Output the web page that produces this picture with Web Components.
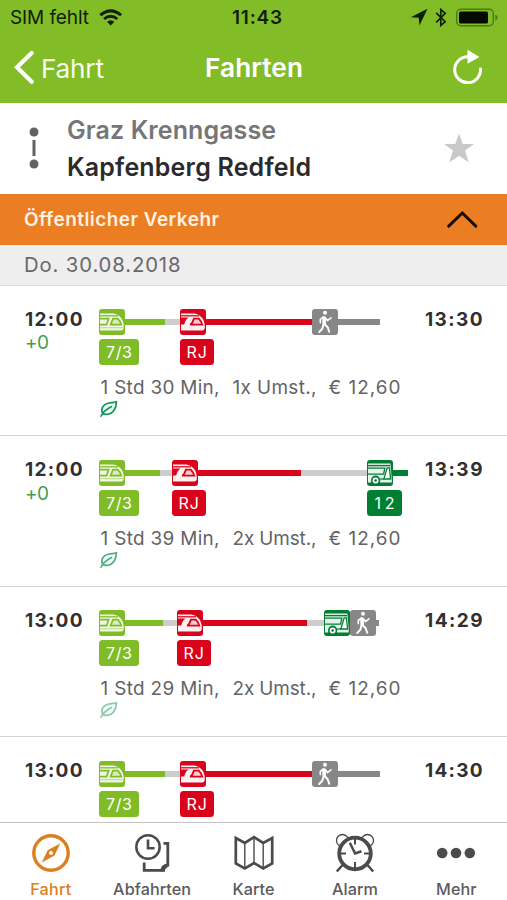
<!DOCTYPE html>
<html lang="de">
<head>
<meta charset="utf-8">
<title>Fahrten</title>
<style>
html,body{margin:0;height:100%;overflow:hidden}
body{font-family:Inter,"Liberation Sans",sans-serif;background:#fff;color:#2b2b2d}
</style>
</head>
<body>
<trip-app></trip-app>
<script>
const define = (name, html, setup) => customElements.define(name, class extends HTMLElement {
  connectedCallback() {
    if (this.shadowRoot) return;
    const root = this.attachShadow({mode: 'open'});
    root.innerHTML = typeof html === 'function' ? html(this) : html;
    if (setup) setup(this, root);
  }
});

/* Text tracked so that it fills the width given in its "w" attribute. */
define('fit-text', '<style>:host{display:block;white-space:pre;flex:none}span{display:inline-block}</style><span><slot></slot></span>', (el, root) => {
  const span = root.querySelector('span'), w = parseFloat(el.getAttribute('w'));
  const n = el.textContent.length;
  el.style.width = w + 'px';
  span.style.letterSpacing = (w - span.getBoundingClientRect().width) / (n - 1) + 'px';
});

const icons = {
  train: bg => `<rect width="26" height="26" rx="3" fill="${bg}"/>
<path d="M1 4.6H14.5Q20.5 5.4 23.6 11.5Q24.8 14.5 24.8 18Q24.8 21.6 21.8 21.6H1Z" fill="#fff" fill-opacity=".88"/>
<path d="M1 6.8H19" stroke="${bg}" stroke-width="1.3"/>
<path d="M1 9.7H9.6L7.6 15.7H1" fill="none" stroke="${bg}" stroke-width="1.7"/>
<path d="M14 9.7H18.8Q21.5 12.4 22.3 15.7H11.6Z" fill="${bg}" fill-opacity=".2" stroke="${bg}" stroke-width="1.7"/>
<path d="M1 18.7H24.8" stroke="${bg}" stroke-width=".5"/>`,
  express: bg => `<rect width="26" height="26" rx="3" fill="${bg}"/>
<path d="M1 4.6H14.5Q20.5 5.4 23.6 11.5Q24.8 14.5 24.8 18Q24.8 21.6 21.8 21.6H1Z" fill="#fff" fill-opacity=".94"/>
<path d="M1 6.8H19" stroke="${bg}" stroke-width="1.3"/>
<path d="M1 8.6H8.6Q5.6 10.3 4.2 15.5H1Z" fill="${bg}"/>
<path d="M13.8 9.7H18.8Q21.5 12.4 22.3 15.7H10.2Q12.6 14.4 13.8 9.7Z" fill="${bg}" fill-opacity=".15" stroke="${bg}" stroke-width="1.8"/>`,
  bus: bg => `<rect width="26" height="26" rx="3" fill="${bg}"/>
<path d="M1 3.6H23.4L24.8 19.5V22.5H13.1A4.6 4.6 0 0 0 4.1 22.5H1Z" fill="#fff" fill-opacity=".9"/>
<path d="M1 5.6H23" stroke="${bg}" stroke-width="1.4"/>
<path d="M1 8.2H17.8L16.6 14.2H1" fill="none" stroke="${bg}" stroke-width="1.3"/>
<path d="M20.2 7.8H22.4L23.6 19H16.8Z" fill="#fff" stroke="${bg}" stroke-width="1.3"/>
<path d="M12.5 19H16.8" stroke="${bg}" stroke-width="1.2"/>
<circle cx="8.6" cy="20.2" r="4.6" fill="${bg}"/><circle cx="8.6" cy="20.4" r="3" fill="#fff"/><circle cx="8.6" cy="20.5" r="1.3" fill="${bg}"/>`,
  walk: bg => `<rect width="26" height="26" rx="3" fill="${bg}"/>
<circle cx="13" cy="3.8" r="2" fill="#fff"/>
<g fill="none" stroke="#fff" stroke-linecap="round" stroke-linejoin="round"><path d="M12 9L12.2 14.4" stroke-width="3.6"/><path d="M11.4 8L8.3 10.4V13.6" stroke-width="1.6"/><path d="M13.2 8.5L15.4 11.6L19 8.8" stroke-width="1.6"/><path d="M12.5 15L15.7 18.3L17.2 22.7" stroke-width="2"/><path d="M11.5 15.5L10.4 19.6L7.2 23" stroke-width="2"/></g>`
};

define('trip-leg', el => {
  const c = el.getAttribute('color'), i = el.getAttribute('icon'), b = el.getAttribute('badge');
  const ride = el.getAttribute('ride'), w = el.getAttribute('w');
  return `<style>
  :host{display:flex;flex-direction:column;flex:none;width:${w}px;gap:4px;align-items:flex-start}
  .track{display:flex;align-items:center;width:${w}px;height:26px}
  svg{flex:none;display:block}
  .ride{width:${ride}px;height:6px;background:${c};flex:none}
  .wait{flex:1;height:6px;background:#cdcdcd}
  .badge{height:26px;border-radius:3.5px;background:${c};color:#fff;font:400 16px/27px Inter,sans-serif;display:flex;justify-content:center}
  </style><div class="track"><svg width="26" height="26" viewBox="0 0 26 26">${icons[i](c)}</svg><div class="ride"></div><div class="wait"></div></div>
  ${b ? `<div class="badge" style="width:${el.getAttribute('bw')}px"><fit-text w="${el.getAttribute('tw')}">${b}</fit-text></div>` : ''}`;
});

define('trip-row', el => {
  const a = n => el.getAttribute(n);
  return `<style>
  :host{display:grid;grid-template-columns:99px 326px 1fr;height:150.5px;box-sizing:border-box;border-bottom:1px solid #d4d4d6;flex:none}
  :host([cropped]){height:86px;border:0}
  .t{font:700 19px/24px Inter,sans-serif;color:#303032;padding-top:22.2px}
  .dep{padding-left:25px}
  .delay{font:400 19px/22px Inter,sans-serif;color:#469b50;margin-top:.5px}
  .legs{display:flex;height:56px;padding-top:23.5px}
  .info{display:flex;font:400 18.9px/24px Inter,sans-serif;color:#636365;padding:11px 0 0 1.5px}
  .info fit-text+fit-text{margin-left:13px}
  svg{display:block}
  </style><div class="t dep"><fit-text w="57.5">${a('dep')}</fit-text>${a('delay') ? `<div class="delay"><fit-text w="24">${a('delay')}</fit-text></div>` : ''}</div>
  <div><div class="legs"><slot></slot></div>
  ${a('time') ? `<div class="info"><fit-text w="119">${a('time')}</fit-text><fit-text w="84">${a('changes')}</fit-text><fit-text w="72" style="margin-left:12px">€ 12,60</fit-text></div>
  <svg width="20" height="18" viewBox="0 0 20 18" style="opacity:${a('leaf') || 1}"><path d="M3.8 13.5C1.2 8.5 4.4 4.4 9 3.2C12 2.4 14.5 2.7 17.4 1.8C17.5 8 14.2 13.8 8 14.4C6 14.6 4.8 14.3 3.8 13.5Z" fill="#e9faf2" stroke="#17945c" stroke-width="1.7"/><path d="M1.6 16.8C3.5 12.5 7.5 9 13 6.2" fill="none" stroke="#17945c" stroke-width="1.6"/></svg>` : ''}</div>
  <div class="t"><fit-text w="57.5">${a('arr')}</fit-text></div>`;
});

define('status-bar', `<style>
:host{display:flex;height:35px;align-items:center;color:#10200a;font:400 19px/34px Inter,sans-serif;padding-left:10px}
b{font-weight:600;margin-left:109px}svg{display:block;flex:none}
</style><fit-text w="79">SIM fehlt</fit-text>
<svg width="24" height="17" viewBox="0 0 24 17" style="margin-left:10px"><g fill="none" stroke="#10200a"><path d="M1.3 6.2Q11.7-2.5 22.1 6.2" stroke-width="3"/><path d="M5.1 10Q11.7 4.4 18.3 10" stroke-width="2.8"/></g><path d="M8 12.8Q11.7 9.7 15.4 12.8L11.7 16.6Z" fill="#10200a"/></svg>
<b><fit-text w="50">11:43</fit-text></b>
<svg width="92" height="22" viewBox="0 0 92 22" style="margin-left:128px"><path d="M.8 10.3L17.5 1.8L9.5 18.5L8.7 10.8Z" fill="#10200a"/><path d="M26.2 5.8L35.2 14.7L30.8 18.5V2.5L35.2 6.3L26.2 15.3" fill="none" stroke="#10200a" stroke-width="1.7"/><rect x="46.7" y="2.2" width="36.6" height="16.6" rx="4" fill="none" stroke="#487d18" stroke-width="1.4"/><rect x="49" y="4.6" width="29" height="11.8" rx="1.5" fill="#050b02"/><path d="M85.3 7.5V13.7Q87.7 12.5 87.7 10.5T85.3 7.5Z" fill="#487d18"/></svg>`);

define('nav-bar', `<style>
:host{display:grid;grid-template-columns:205px 1fr 55px;height:67.5px;color:#fff;font:400 26.2px/66px Inter,sans-serif}
.back{display:flex;align-items:center;padding-left:13px}.title{font-weight:600}
svg{display:block}.back svg{margin-top:-3px}.back fit-text{margin-left:7px;opacity:.94}
</style><div class="back"><svg width="21" height="36" viewBox="0 0 21 36"><path d="M18.7 4L4 18.3L18.7 32.7" fill="none" stroke="#fff" stroke-width="4.2" stroke-linecap="round"/></svg><fit-text w="63">Fahrt</fit-text></div>
<div class="title"><fit-text w="98">Fahrten</fit-text></div>
<svg width="34" height="38" viewBox="0 0 34 38" style="margin-top:13px"><path d="M15.5 8.8A12.9 12.9 0 1 0 28.5 21" fill="none" stroke="#fff" stroke-width="3" stroke-linecap="round"/><path d="M15.5 1.8L27.5 9L15.5 15.8Z" fill="#fff"/></svg>`);

define('route-header', `<style>
:host{display:grid;grid-template-columns:67px 1fr 65px;height:91.5px;align-items:center}
.n{font:600 25px/37px Inter,sans-serif;color:#2b2b2d;padding-top:1px}.o{color:#767678}svg{display:block}
</style><svg width="12" height="44" viewBox="0 0 12 44" style="margin-left:28px"><g fill="#636365"><circle cx="6" cy="6" r="4.5"/><circle cx="6" cy="38" r="4.5"/><rect x="4.5" y="14" width="3" height="16"/></g></svg>
<div class="n"><fit-text class="o" w="209">Graz Krenngasse</fit-text><fit-text w="244">Kapfenberg Redfeld</fit-text></div>
<svg width="34" height="32" viewBox="0 0 34 32"><path d="M17 1.5L20.7 12H32L23 18.6L26.8 30.5L17 23.7L7.2 30.5L11 18.6L2 12H13.3Z" fill="#c9c9cb"/></svg>`);

define('section-header', `<style>
:host{display:flex;justify-content:space-between;align-items:center;height:50.5px;background:#eb7d23;color:#fff1e2;font:600 19px/50px Inter,sans-serif;padding:0 28.5px 0 24px}svg{display:block}fit-text{padding-top:2px}
</style><fit-text w="195">Öffentlicher Verkehr</fit-text><svg width="34" height="22" viewBox="0 0 34 22"><path d="M3.7 18.1L17.3 5L30.8 18.1" fill="none" stroke="#1c0d03" stroke-width="3" stroke-linecap="round"/></svg>`);

define('date-header', `<style>
:host{display:block;height:41px;box-sizing:border-box;background:#eee;border-bottom:1px solid #dcdcde;color:#68686a;font:400 20.3px/40px Inter,sans-serif;padding-left:24px}
</style><fit-text w="156.5">Do. 30.08.2018</fit-text>`);

const tabs = {
  fahrt: `<circle cx="20" cy="20" r="17.2" fill="none" stroke="#dc7e22" stroke-width="3.4"/><path d="M29.2 10.5L23.5 22.5L10.8 29.5L16.7 17.2Z" fill="#dc7e22"/><circle cx="20" cy="20" r="2" fill="#fff"/>`,
  abfahrten: `<g fill="none" stroke="#4b4b4d"><circle cx="16" cy="14" r="11.7" stroke-width="2.5"/><path d="M16 6.5V15.3H22.5" stroke-width="2.6"/><path d="M31.5 10.3H35.8V32Q32 31.5 31.7 37.3H12.2V29.5" stroke-width="2.8"/></g><path d="M28.5 38.5Q28 30.5 36.5 31V33L31 38.5Z" fill="#4b4b4d"/>`,
  karte: `<g fill="none" stroke="#4b4b4d" stroke-linejoin="miter"><path d="M1.8 5L10.8 10L20 4.2L29.2 10L38.2 5V30.5L29.2 35.5L20 30L10.8 35.5L1.8 30.5Z" stroke-width="2.7"/><path d="M10.8 10V35M20 4.2V30M29.2 10V35" stroke-width="1.4"/></g>`,
  alarm: `<g fill="none" stroke="#4b4b4d"><circle cx="7.5" cy="7.5" r="6" stroke-width="1.3"/><circle cx="32.5" cy="7.5" r="6" stroke-width="1.3"/><path d="M7.5 32L1.8 38.5M32.5 32L38.2 38.5" stroke-width="2.5"/><circle cx="20" cy="20.5" r="15.8" fill="#fff" stroke-width="3.8"/><path d="M20 6V11.5M20 29V35M5 20.5H11M29 20.5H35" stroke-width="2"/><path d="M14.8 9.8L20.1 20.5L26.5 18.2" stroke-width="2.5"/></g>`,
  mehr: `<g fill="#4b4b4d"><circle cx="6.2" cy="20" r="5.3"/><circle cx="20" cy="20" r="5.3"/><circle cx="33.8" cy="20" r="5.3"/></g>`
};
define('tab-item', el => `<style>
:host{display:flex;flex-direction:column;align-items:center;flex:1;padding-top:10px;color:${el.hasAttribute('active') ? '#dc7e22' : '#5b5b5d'};font:500 16.2px/22px Inter,sans-serif}svg{display:block;margin-bottom:5px}
</style><svg width="40" height="40" viewBox="0 0 40 40">${tabs[el.getAttribute('icon')]}</svg><fit-text w="${el.getAttribute('w')}">${el.getAttribute('label')}</fit-text>`);

define('tab-bar', `<style>:host{display:flex;height:78px;box-sizing:border-box;border-top:1px solid #c4c4c6;background:#fff;flex:none}</style>
<tab-item icon="fahrt" label="Fahrt" w="41" active></tab-item><tab-item icon="abfahrten" label="Abfahrten" w="78"></tab-item><tab-item icon="karte" label="Karte" w="42"></tab-item><tab-item icon="alarm" label="Alarm" w="46"></tab-item><tab-item icon="mehr" label="Mehr" w="40.5"></tab-item>`);

const G = '#80bc28', R = '#d9041b', D = '#007f33', W = '#878787';
const leg = (color, icon, w, ride, badge, bw, tw) => `<trip-leg color="${color}" icon="${icon}" w="${w}" ride="${ride}"${badge ? ` badge="${badge}" bw="${bw}" tw="${tw}"` : ''}></trip-leg>`;
define('trip-app', `<style>
:host{display:flex;flex-direction:column;height:900px;width:507px;background:#fff}
.top{background:#82bd27;flex:none}
.list{flex:1;min-height:0;overflow:hidden;display:flex;flex-direction:column}
route-header,section-header,date-header{flex:none}
</style><div class="top"><status-bar></status-bar><nav-bar></nav-bar></div>
<route-header></route-header><section-header></section-header><date-header></date-header>
<div class="list">
<trip-row dep="12:00" delay="+0" arr="13:30" time="1 Std 30 Min," changes="1x Umst.,">${leg(G,'train',81,40,'7/3',40,26)}${leg(R,'express',132,106,'RJ',33.5,20.5)}${leg(W,'walk',68,42)}</trip-row>
<trip-row dep="12:00" delay="+0" arr="13:39" time="1 Std 39 Min," changes="2x Umst.," leaf=".75">${leg(G,'train',73,35,'7/3',40,26)}${leg(R,'express',195,103,'RJ',33.5,20.5)}${leg(D,'bus',41,15,'12',35,20)}</trip-row>
<trip-row dep="13:00" arr="14:29" time="1 Std 29 Min," changes="2x Umst.," leaf=".5">${leg(G,'train',78,38,'7/3',40,26)}${leg(R,'express',147,104,'RJ',33.5,20.5)}${leg(D,'bus',26,0)}${leg(W,'walk',28.5,2.5)}</trip-row>
<trip-row cropped dep="13:00" arr="14:30">${leg(G,'train',81,40,'7/3',40,26)}${leg(R,'express',132,106,'RJ',33.5,20.5)}${leg(W,'walk',68,42)}</trip-row>
</div><tab-bar></tab-bar>`);
</script>
</body>
</html>
